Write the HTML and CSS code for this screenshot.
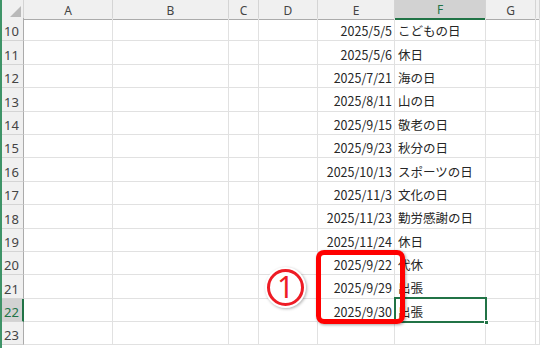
FILE: index.html
```html
<!DOCTYPE html>
<html lang="ja">
<head>
    <meta charset="UTF-8">
    <meta name="viewport" content="width=device-width, initial-scale=1.0">
    <title>祝日リスト</title>
    <link rel="stylesheet" href="styles.css">
</head>
<body>
    <div class="sheet">
        <div class="row head">
            <div class="corner"><div class="tri"></div></div>
            <div class="ch">A</div>
            <div class="ch">B</div>
            <div class="ch">C</div>
            <div class="ch">D</div>
            <div class="ch">E</div>
            <div class="ch sel">F</div>
            <div class="ch">G</div>
            <div class="ch"></div>
        </div>

        <div class="row"><div class="rh">10</div><div></div><div></div><div></div><div></div><div class="e">2025/5/5</div><div class="f">こどもの日</div><div></div><div></div></div>
        <div class="row"><div class="rh">11</div><div></div><div></div><div></div><div></div><div class="e">2025/5/6</div><div class="f">休日</div><div></div><div></div></div>
        <div class="row"><div class="rh">12</div><div></div><div></div><div></div><div></div><div class="e">2025/7/21</div><div class="f">海の日</div><div></div><div></div></div>
        <div class="row"><div class="rh">13</div><div></div><div></div><div></div><div></div><div class="e">2025/8/11</div><div class="f">山の日</div><div></div><div></div></div>
        <div class="row"><div class="rh">14</div><div></div><div></div><div></div><div></div><div class="e">2025/9/15</div><div class="f">敬老の日</div><div></div><div></div></div>
        <div class="row"><div class="rh">15</div><div></div><div></div><div></div><div></div><div class="e">2025/9/23</div><div class="f">秋分の日</div><div></div><div></div></div>
        <div class="row"><div class="rh">16</div><div></div><div></div><div></div><div></div><div class="e">2025/10/13</div><div class="f">スポーツの日</div><div></div><div></div></div>
        <div class="row"><div class="rh">17</div><div></div><div></div><div></div><div></div><div class="e">2025/11/3</div><div class="f">文化の日</div><div></div><div></div></div>
        <div class="row"><div class="rh">18</div><div></div><div></div><div></div><div></div><div class="e">2025/11/23</div><div class="f">勤労感謝の日</div><div></div><div></div></div>
        <div class="row"><div class="rh">19</div><div></div><div></div><div></div><div></div><div class="e">2025/11/24</div><div class="f">休日</div><div></div><div></div></div>
        <div class="row"><div class="rh">20</div><div></div><div></div><div></div><div></div><div class="e">2025/9/22</div><div class="f">代休</div><div></div><div></div></div>
        <div class="row"><div class="rh">21</div><div></div><div></div><div></div><div></div><div class="e">2025/9/29</div><div class="f">出張</div><div></div><div></div></div>
        <div class="row"><div class="rh sel">22</div><div></div><div></div><div></div><div></div><div class="e">2025/9/30</div><div class="f">出張</div><div></div><div></div></div>
        <div class="row"><div class="rh">23</div><div></div><div></div><div></div><div></div><div></div><div></div><div></div><div></div></div>

        <!-- 選択セル F22 -->
        <div class="active-cell"><div class="handle"></div></div>

        <!-- 注釈 -->
        <div class="mark-box"></div>
        <div class="mark-num">1</div>
    </div>
</body>
</html>
```

FILE: styles.css
```css
* {
    box-sizing: border-box;
}

body {
    margin: 0;
    background-color: #ffffff;
    font-family: 'Noto Sans CJK JP', sans-serif;
    overflow: hidden;
}

.sheet {
    position: relative;
    width: 540px;
    height: 348px;
    border-left: 2px solid #3f9468;
}

.row {
    display: grid;
    grid-template-columns: 22px 89px 116px 30px 59px 77px 91px 50px 1fr;
    height: 23.4px;
}

.row > div {
    border-right: 1px solid #e1e1e1;
    border-bottom: 1px solid #e1e1e1;
    font-size: 12.5px;
    color: #262626;
    white-space: nowrap;
    display: flex;
    align-items: center;
    padding-top: 3px;
}

.row.head {
    height: 18px;
}

.row.head > div {
    background-color: #f0f0f0;
    border-right: 1px solid #d4d4d4;
    border-bottom: 1px solid #ababab;
    padding-top: 1px;
}

.corner {
    justify-content: flex-end;
    align-items: flex-end !important;
    padding: 0 2px 2px 0 !important;
}

.tri {
    width: 11px;
    height: 11px;
    background-color: #b9b9b9;
    clip-path: polygon(100% 0, 100% 100%, 0 100%);
}

.ch {
    justify-content: center;
    font-family: 'Noto Sans', sans-serif;
    font-size: 12px !important;
    color: #444444 !important;
}

.ch.sel {
    background-color: #d2d2d2 !important;
    color: #217346 !important;
    border-bottom: 2px solid #217346 !important;
}

.rh {
    background-color: #f0f0f0;
    border-right: 1px solid #ababab !important;
    border-bottom: 1px solid #d4d4d4 !important;
    font-family: 'Noto Sans', sans-serif;
    font-size: 13px !important;
    color: #444444 !important;
    align-items: flex-end !important;
    padding: 0 0 0 2px !important;
}

.rh.sel {
    background-color: #d2d2d2;
    color: #217346 !important;
    border-right: 2px solid #217346 !important;
}

.e {
    justify-content: flex-end;
    padding-right: 2px;
}

.f {
    padding-left: 3px;
}

.active-cell {
    position: absolute;
    left: 392px;
    top: 297px;
    width: 93px;
    height: 26px;
    border: 2px solid #217346;
}

.handle {
    position: absolute;
    right: -4px;
    bottom: -4px;
    width: 5px;
    height: 5px;
    background-color: #217346;
    border: 1px solid #ffffff;
}

.mark-box {
    position: absolute;
    left: 314px;
    top: 250px;
    width: 89px;
    height: 74px;
    border: 5px solid #ff0000;
    border-radius: 8px;
    box-shadow: 1px 1px 3px rgba(0, 0, 0, 0.35);
}

.mark-num {
    position: absolute;
    left: 265px;
    top: 269px;
    width: 37px;
    height: 37px;
    border: 3px solid #ee1c25;
    border-radius: 50%;
    background-color: #ffffff;
    box-shadow: 0 0 0 2px #ffffff, 1px 1px 3px 2px rgba(0, 0, 0, 0.3);
    display: flex;
    justify-content: center;
    align-items: center;
    font-family: 'Noto Sans', sans-serif;
    font-size: 30px;
    line-height: 1;
    color: #ee1c25;
    padding-bottom: 1px;
}
```
